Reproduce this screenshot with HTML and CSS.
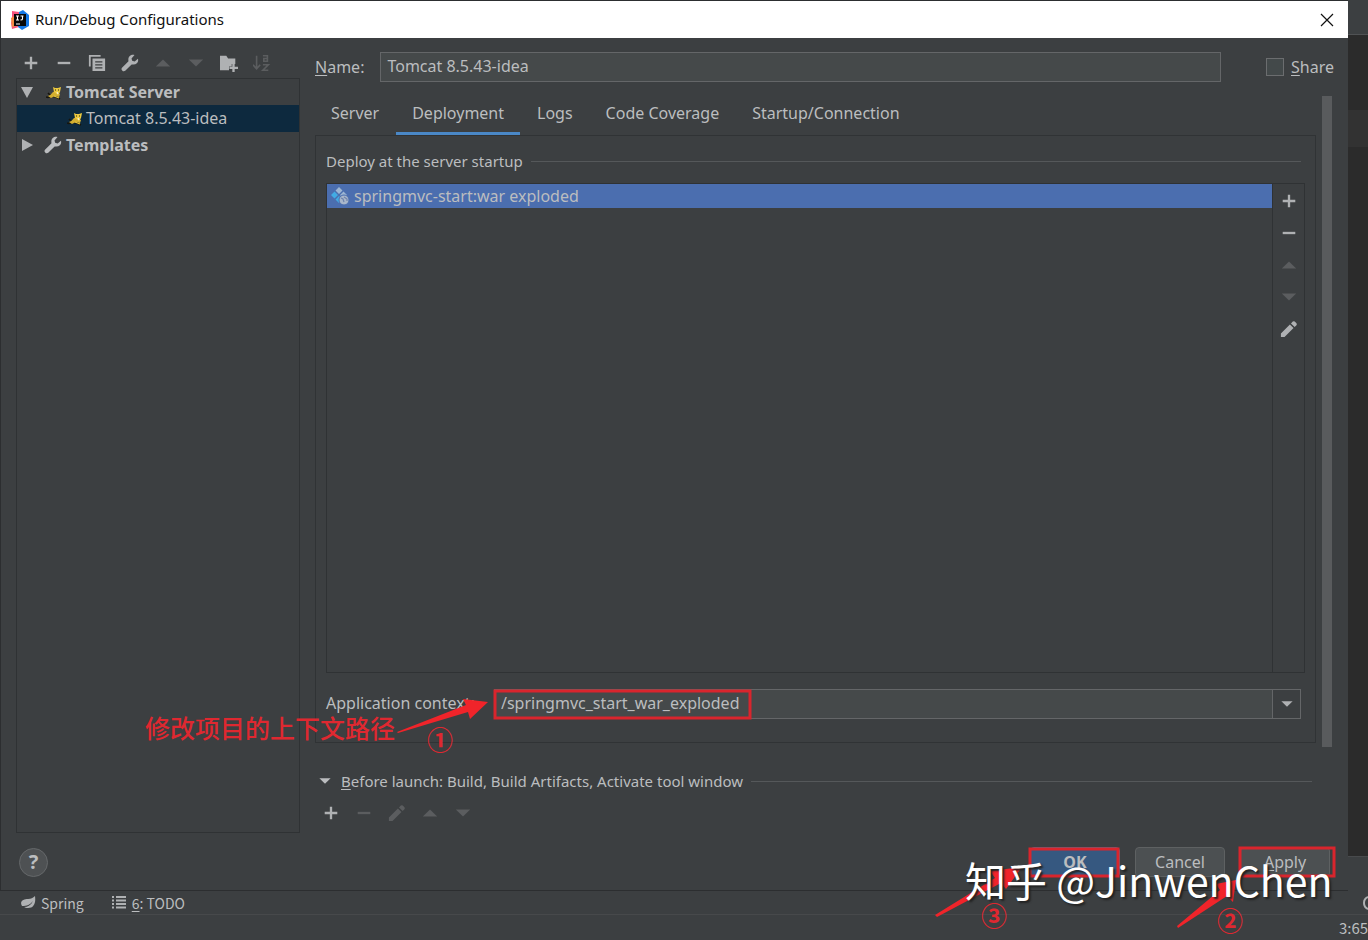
FILE: index.html
```html
<!DOCTYPE html>
<html lang="en">
<head>
<meta charset="utf-8">
<title>Run/Debug Configurations</title>
<link rel="stylesheet" href="styles.css">
</head>
<body>
<svg class="defs" aria-hidden="true">
  <symbol id="plus" viewBox="0 0 20 20"><path d="M10 3v14M3 10h14" fill="none" stroke="currentColor" stroke-width="2.6"/></symbol>
  <symbol id="minus" viewBox="0 0 20 20"><path d="M3 10h14" fill="none" stroke="currentColor" stroke-width="2.6"/></symbol>
  <symbol id="up" viewBox="0 0 20 20"><path d="M2 14l8-8 8 8z" fill="currentColor"/></symbol>
  <symbol id="down" viewBox="0 0 20 20"><path d="M2 6h16l-8 8z" fill="currentColor"/></symbol>
  <symbol id="treearrow" viewBox="0 0 14 14"><path d="M1 2h12L7 13z" fill="currentColor"/></symbol>
  <symbol id="pencil" viewBox="0 0 20 20"><path d="M1 19v-4L11 5l4 4L5 19zM12.200 3.800l2-2q1-.9 2.200 0l1.900 1.900q.9 1.200 0 2.200l-2 2z" fill="currentColor"/></symbol>
  <symbol id="wrench" viewBox="0 0 20 20"><path d="M18.800 5.200l-3.600 3-2.800-.6-.7-2.600L15 1.200C11.500.1 7.800 2.800 8.200 6.800c0 .9.200 1.300-.4 1.900L1.100 15.200c-1.900 2.100 1.300 5.300 3.600 3.500l6.800-6.700c.6-.6 1-.4 1.900-.4 4 .2 6.600-2.900 5.400-6.400z" fill="currentColor"/></symbol>
  <symbol id="copy" viewBox="0 0 20 20"><path d="M2 14V2h12" fill="none" stroke="currentColor" stroke-width="2"/><path fill-rule="evenodd" d="M5 5h14v14H5zM8 8v1.500h8V8zM8 11.300v1.500h8v-1.500zM8 14.600v1.500h8v-1.500z" fill="currentColor"/></symbol>
  <symbol id="cat" viewBox="0 0 16 16"><path d="M0 13q3 1 5-1M2 9l3 3M4 12l6 1 4 2" fill="none" stroke="#17150d" stroke-width="1.600"/><path d="M2 12q3-1 5-4l3-1 4 3-1 3-4-1-4 2z" fill="#d3ae30"/><path d="M8 12l5 2" stroke="#e7c63c" stroke-width="1.200"/><path d="M7 3l2 1h3l3-1-1 5-2 3-4-3z" fill="#ecc93f"/><path d="M9 6h1M12 6h1" stroke="#2b2411" stroke-width="1.200"/><path d="M11 8l1 2" stroke="#f4eecb" stroke-width="1.400"/></symbol>
</svg>
<div class="page">
  <div class="upper">
    <main class="dialog">
      <header class="titlebar">
        <svg class="i20" viewBox="0 0 20 20" aria-hidden="true"><path d="M2 1l7 1 4 6-4 9-7 2-1-6 1-4z" fill="#f7537c"/><path d="M1 8l6-4v12l-5 1z" fill="#f48a42"/><path d="M9 2l4-2 6 5v11l-7 4-4-3z" fill="#1678e5"/><path d="M4 4h12v12H4z" fill="#080808"/><path d="M6 6h3M7.500 6v4M6 10h3M10.500 6h3M12.500 6v3q0 1-2 1M6 14h4" fill="none" stroke="#fff" stroke-width="1.100"/></svg>
        <h1>Run/Debug Configurations</h1>
        <button class="close" aria-label="Close"><svg viewBox="0 0 14 14"><path d="M1 1l12 12M13 1L1 13" stroke="#111" stroke-width="1.200"/></svg></button>
      </header>
      <div class="body">
        <aside class="side">
          <div class="toolbar">
            <button aria-label="Add"><svg><use href="#plus"/></svg></button>
            <button aria-label="Remove"><svg><use href="#minus"/></svg></button>
            <button aria-label="Copy"><svg><use href="#copy"/></svg></button>
            <button aria-label="Edit templates"><svg><use href="#wrench"/></svg></button>
            <button class="off" aria-label="Move up"><svg><use href="#up"/></svg></button>
            <button class="off" aria-label="Move down"><svg><use href="#down"/></svg></button>
            <button aria-label="New folder"><svg viewBox="0 0 20 20"><path d="M0 2h7l2 3h8v6h-4v3h-3v4H0z" fill="currentColor"/><path d="M15 11v9M10.500 15.500h9.500" stroke="currentColor" stroke-width="2.600"/></svg></button>
            <button class="off" aria-label="Sort"><svg viewBox="0 0 20 20"><path d="M4 2v14M0 12l4 4.500L8 12M11 2h5v6h-4V5h4M11 12h6l-6 6h6" fill="none" stroke="currentColor" stroke-width="1.800"/></svg></button>
          </div>
          <ul class="tree">
            <li><svg class="arrow"><use href="#treearrow"/></svg><svg class="i16"><use href="#cat"/></svg><b>Tomcat Server</b></li>
            <li class="child selected"><svg class="i16"><use href="#cat"/></svg><span>Tomcat 8.5.43-idea</span></li>
            <li><svg class="arrow right"><use href="#treearrow"/></svg><svg class="i18"><use href="#wrench"/></svg><b>Templates</b></li>
          </ul>
        </aside>
        <section class="content">
          <div class="namerow">
            <label for="name"><u>N</u>ame:</label>
            <input id="name" class="field" type="text" value="Tomcat 8.5.43-idea">
            <input id="share" class="check" type="checkbox"><label for="share"><u>S</u>hare</label>
          </div>
          <div class="scroll">
            <div class="config">
              <nav class="tabs">
                <button>Server</button><button class="active">Deployment</button><button>Logs</button><button>Code Coverage</button><button>Startup/Connection</button>
              </nav>
              <div class="panel">
                <div class="group"><h2>Deploy at the server startup</h2></div>
                <div class="artifacts">
                  <ul><li><svg class="i20" viewBox="0 0 20 20"><path d="M9 1l3.500 3.500L9 8 5.500 4.500zM13.500 5.500L17 9l-3.500 3.500L10 9z" fill="#9db6d3"/><path d="M4.500 5.500L8 9l-3.500 3.500L1 9zM9 10l3.500 3.500L9 17l-3.500-3.500z" fill="#42abe3"/><circle cx="14" cy="14" r="5" fill="#a9b7ca" stroke="#4b6eaf"/><path d="M11 12l2 1 1 3M14 11l3 2v2" fill="none" stroke="#6f84ad" stroke-width="1.200"/></svg>springmvc-start:war exploded</li></ul>
                  <div class="vtools">
                    <button aria-label="Add artifact"><svg><use href="#plus"/></svg></button>
                    <button aria-label="Remove artifact"><svg><use href="#minus"/></svg></button>
                    <button class="off" aria-label="Move artifact up"><svg><use href="#up"/></svg></button>
                    <button class="off" aria-label="Move artifact down"><svg><use href="#down"/></svg></button>
                    <button aria-label="Edit artifact"><svg><use href="#pencil"/></svg></button>
                  </div>
                </div>
                <div class="context">
                  <label for="context">Application context:</label>
                  <div class="combo"><input id="context" type="text" value="/springmvc_start_war_exploded"><button aria-label="Show contexts"><svg><use href="#down"/></svg></button></div>
                  <div class="note">
                    <svg viewBox="0 0 620 80"><path d="M252 43L321 16l-3-6 25 3-18 17-2-7-70 21z" fill="#f0242a"/><rect x="350" y="2" width="255" height="27" fill="none" stroke="#d9252d" stroke-width="3"/></svg>
                    <p lang="zh">修改项目的上下文路径</p>
                    <span class="num n1">①</span>
                  </div>
                </div>
              </div>
            </div>
            <div class="thumb"></div>
          </div>
          <div class="before">
            <div class="group"><svg class="fold"><use href="#down"/></svg><h2><u>B</u>efore launch: Build, Build Artifacts, Activate tool window</h2></div>
            <div class="toolbar">
              <button aria-label="Add task"><svg><use href="#plus"/></svg></button>
              <button class="off" aria-label="Remove task"><svg><use href="#minus"/></svg></button>
              <button class="off" aria-label="Edit task"><svg><use href="#pencil"/></svg></button>
              <button class="off" aria-label="Move task up"><svg><use href="#up"/></svg></button>
              <button class="off" aria-label="Move task down"><svg><use href="#down"/></svg></button>
            </div>
          </div>
        </section>
      </div>
      <footer class="actions">
        <button class="help" aria-label="Help">?</button>
        <button class="btn primary">OK</button>
        <button class="btn">Cancel</button>
        <button class="btn"><u>A</u>pply</button>
      </footer>
    </main>
    <div class="editor"><i class="e1"></i><i class="e2"></i><i class="e3"></i><i class="e4"></i><i class="e5"></i></div>
  </div>
  <div class="toolwindows">
    <button><svg viewBox="0 0 16 16"><path d="M15 1c1 7-1 12-7 12-2 0-3-.5-4-1 4 0 7-2 9-6-3 4-6 5-11 5C-1 6 4 4 8 4c3 0 5-1 7-3z" fill="currentColor"/></svg>Spring</button>
    <button><svg viewBox="0 0 16 16"><path d="M1 2h2M5 2h10M1 5.500h2M5 5.500h10M1 9h2M5 9h10M1 12.500h2M5 12.500h10" stroke="currentColor" stroke-width="2"/></svg><span><u>6</u>: TODO</span></button>
    <svg class="log" viewBox="0 0 8 16"><path d="M8 2a6.500 6.500 0 0 0 0 12" fill="none" stroke="currentColor" stroke-width="2"/></svg>
  </div>
  <div class="status"><span>3:65</span></div>
  <div class="marks">
    <svg viewBox="0 0 440 110"><g fill="none" stroke="#d9252d" stroke-width="3"><rect x="102" y="19" width="88" height="27"/><rect x="312" y="18" width="94" height="28"/></g><g fill="#f0242a"><path d="M7 85L67 48l-5-7 32-4-16 22-5-6L9 87z"/><path d="M249 96l43-36-4-6 20-4-3 22-6-6-49 32z"/></g></svg>
    <span class="num n3">③</span><span class="num n2">②</span>
    <p lang="zh">知乎 @JinwenChen</p>
  </div>
</div>
</body>
</html>
```
FILE: styles.css
```css
* { box-sizing: border-box; }
body { margin: 0; background: #3c3f41; color: #bbbdbf; font: 16px/24px "Noto Sans", "Noto Sans CJK SC", sans-serif; }
button, input { font: inherit; color: inherit; }
button { border: 0; padding: 0; background: none; }
h1, h2, p, ul { margin: 0; padding: 0; font-size: inherit; font-weight: normal; }
ul { list-style: none; }
svg { flex: none; display: block; }
u { text-underline-offset: 2px; text-decoration-thickness: 1px; }
.defs { position: absolute; width: 0; height: 0; }
.page { position: relative; min-height: 100vh; display: flex; flex-direction: column; overflow: hidden; }
.upper { flex: 1; display: flex; }
.dialog { flex: 1; min-width: 0; display: flex; flex-direction: column; border: 1px solid #2c2e30; border-width: 1px 0 1px 1px; }
.titlebar { height: 37px; display: flex; align-items: center; gap: 5px; padding: 0 14px 0 9px; background: #fff; color: #111; }
.titlebar h1 { flex: 1; padding-bottom: 2px; font-size: 15px; }
.i20 { width: 20px; height: 20px; }
.i18 { width: 18px; height: 18px; margin: 0 4px 0 -2px; }
.i16 { width: 16px; height: 16px; margin-right: 4px; }
.close svg { width: 14px; height: 14px; }
.body { flex: 1; display: flex; gap: 15px; padding: 13px 14px 0 15px; }
.side { width: 284px; display: flex; flex-direction: column; }
.toolbar { display: flex; gap: 13px; padding: 2px 6px 5px 5px; }
.toolbar button, .vtools button { width: 20px; height: 20px; display: grid; place-items: center; color: #afb1b3; }
.toolbar svg, .vtools svg { width: 18px; height: 18px; }
.toolbar .off, .vtools .off { color: #5b5d5f; }
.tree { flex: 1; border: 1px solid #2f3234; }
.tree li { height: 26px; display: flex; align-items: center; padding-left: 3px; }
.tree .child { height: 27px; padding: 0 0 2px 50px; }
.tree .child .i16 { margin-right: 3px; }
.tree .selected { background: #0d293e; }
.tree b { font-weight: bold; }
.arrow { width: 14px; height: 14px; margin-right: 12px; color: #afb1b3; }
.arrow.right { transform: rotate(-90deg); }
.content { flex: 1; min-width: 0; display: flex; flex-direction: column; }
.namerow { height: 31px; display: flex; align-items: center; }
.field { flex: 1; min-width: 0; height: 30px; margin-left: 16px; padding: 0 6px 2px; border: 1px solid #646668; background: #45494a; outline: 0; }
.check { appearance: none; width: 18px; height: 18px; margin: 0 7px 0 45px; border: 1px solid #6b6d6f; background: #43494a; }
.scroll { flex: 1; display: flex; gap: 6px; margin-top: 14px; }
.config { flex: 1; min-width: 0; display: flex; flex-direction: column; }
.thumb { width: 10px; margin-right: 2px; background: #595b5d; }
.tabs { height: 39px; display: flex; gap: 1px; }
.tabs button { padding: 0 16px 2px; border-bottom: 3px solid transparent; }
.tabs .active { border-color: #4a88c7; }
.panel { flex: 1; display: flex; flex-direction: column; padding: 13px 10px 23px; margin-bottom: 4px; border: 1px solid #303335; }
.group { display: flex; align-items: center; }
.group h2 { font-size: 15px; }
.group::after { content: ""; flex: 1; height: 1px; margin: 0 4px 0 8px; background: #55585a; }
.artifacts { flex: 1; display: flex; margin-top: 10px; border: 1px solid #2f3234; }
.artifacts ul { flex: 1; }
.artifacts li { height: 24px; display: flex; align-items: center; gap: 4px; padding-left: 3px; background: #4b6eaf; }
.vtools { width: 32px; display: flex; flex-direction: column; align-items: center; gap: 12px; padding-top: 7px; border-left: 1px solid #2f3234; }
.context { position: relative; display: flex; align-items: center; margin: 16px 4px 0 0; }
.context > label { width: 168px; padding-bottom: 2px; }
.combo { flex: 1; height: 30px; display: flex; border: 1px solid #646668; background: #45494a; }
.combo input { flex: 1; min-width: 0; padding: 0 6px 2px; border: 0; background: none; outline: 0; }
.combo button { width: 28px; display: grid; place-items: center; border-left: 1px solid #646668; background: #3c3f41; color: #afb1b3; }
.combo svg, .fold { width: 14px; height: 14px; }
.note { position: absolute; left: -181px; top: 0; width: 620px; height: 80px; pointer-events: none; color: #df2830; }
.note p { position: absolute; left: 0; top: 20px; font: 500 25px/36px "Noto Sans CJK SC", sans-serif; }
.note svg { position: absolute; inset: 0; }
.num { position: absolute; font: 700 26px/30px "Noto Sans CJK SC", sans-serif; color: #df2830; }
.n1 { left: 282px; top: 35px; }
.before { padding: 22px 18px 10px 3px; }
.before h2 { margin-left: 9px; }
.before .toolbar { padding: 10px 3px 0; }
.actions { display: flex; align-items: center; gap: 15px; padding: 14px 18px 13px; }
.help { width: 29px; height: 29px; margin-right: auto; border: 1px solid #65686a; border-radius: 50%; background: #4e5153; font-weight: bold; font-size: 20px; }
.btn { width: 90px; height: 30px; border: 1px solid #5e6162; border-radius: 4px; background: #4c5052; }
.btn.primary { border-color: #4c708c; background: #365880; font-weight: bold; }
.editor { width: 20px; display: flex; flex-direction: column; background: #2b2b2b; }
.e1 { height: 35px; background: #3c3f41; border-bottom: 1px solid #505254; }
.e2 { height: 75px; }
.e3 { height: 37px; background: #323232; }
.e4 { flex: 1; }
.e5 { height: 35px; background: #3c3f41; border-top: 1px solid #484a4c; }
.toolwindows { height: 24px; display: flex; align-items: center; gap: 27px; padding-left: 20px; border-bottom: 1px solid #47494b; font: 14px/20px "Noto Sans CJK SC", sans-serif; }
.toolwindows button { display: flex; align-items: center; gap: 5px; }
.toolwindows svg { width: 16px; height: 16px; color: #afb1b3; }
.toolwindows .log { width: 8px; margin-left: auto; }
.status { height: 25px; display: flex; justify-content: flex-end; overflow: hidden; font: 15px/26px "Noto Sans CJK SC", sans-serif; }
.status span { width: 29px; white-space: nowrap; }
.marks { position: absolute; right: 0; bottom: 0; width: 440px; height: 110px; pointer-events: none; }
.marks p { position: absolute; left: 37px; top: 20px; font: 41px/58px "Noto Sans CJK SC", sans-serif; color: #fff; white-space: nowrap; text-shadow: 2px 2px 2px #222; }
.n3 { left: 53px; top: 70px; }
.n2 { left: 289px; top: 75px; }
```
